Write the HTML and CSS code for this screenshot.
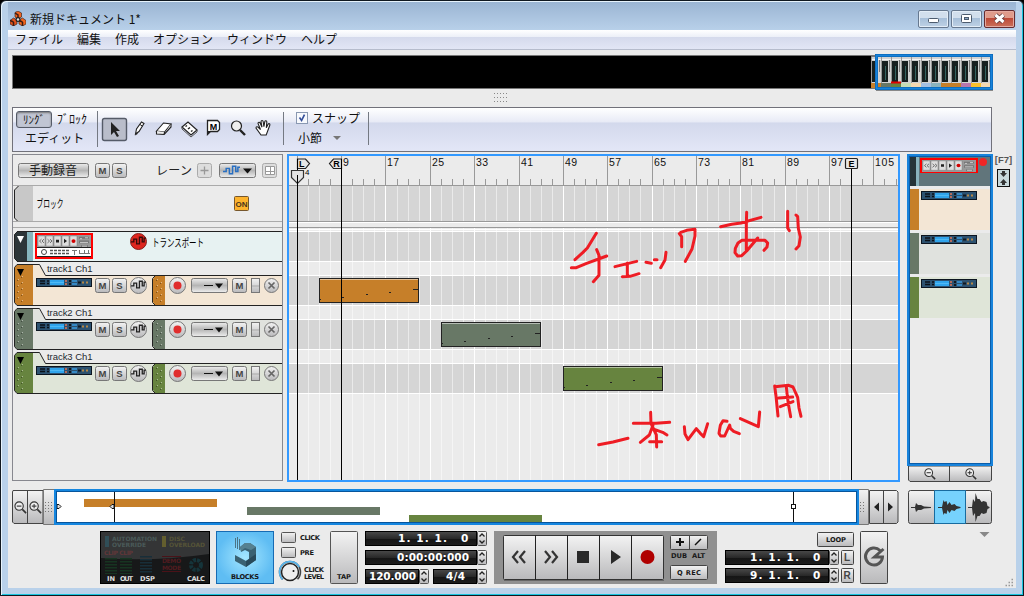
FILE: index.html
```html
<!DOCTYPE html>
<html lang="ja">
<head>
<meta charset="utf-8">
<title>新規ドキュメント 1*</title>
<link rel="stylesheet" href="styles.css">
</head>
<body>
<svg class="defs" width="0" height="0">
  <defs>
    <linearGradient id="metal" x1="0" y1="0" x2="0" y2="1"><stop offset="0" stop-color="#f3f3f3"/><stop offset="1" stop-color="#b9b9bb"/></linearGradient>
    <linearGradient id="gloss" x1="0" y1="0" x2="0" y2="1"><stop offset="0" stop-color="#ededed"/><stop offset=".5" stop-color="#b5b5b5"/><stop offset="1" stop-color="#efefef"/></linearGradient>
    <linearGradient id="lcd" x1="0" y1="0" x2="0" y2="1"><stop offset="0" stop-color="#4a4a4a"/><stop offset=".5" stop-color="#292929"/><stop offset=".55" stop-color="#151515"/><stop offset="1" stop-color="#1c1c1c"/></linearGradient>
    <radialGradient id="glow"><stop offset="0" stop-color="#a4e6ff"/><stop offset="1" stop-color="#5fbdf3"/></radialGradient>
    <symbol id="synth" viewBox="0 0 56 9">
      <rect width="56" height="9" fill="#0c1520"/><rect x="1" y="1" width="54" height="7" fill="#2d5270"/>
      <path d="M4 3h5M4 5.500h5M11 3h2M11 5.500h2" stroke="#0b1118" stroke-width="1.500"/>
      <rect x="14" y="2" width="14" height="5" fill="#30a4ec"/><path d="M14 4.500h14" stroke="#65c7fa" stroke-width=".6"/>
      <path d="M30 2v2M30 5v2" stroke="#e17555" stroke-width="1.500"/><path d="M33 3h2M33 6h2M42 4.500h3" stroke="#101820" stroke-width="2"/>
      <path d="M36 3h5M36 6h5" stroke="#3a9ce0" stroke-width="1.500"/><path d="M46 4.500h2M50 4.500h2" stroke="#b58846" stroke-width="2"/>
    </symbol>
    <symbol id="mini" viewBox="0 0 54 14" preserveAspectRatio="none">
      <rect width="54" height="14" fill="#999"/>
      <g fill="#ddd" stroke="#777" stroke-width=".5"><path d="M1 1h7v11H1zM9 1h7v11H9zM17 1h7v11h-7zM25 1h7v11h-7zM33 1h7v11h-7z"/></g>
      <path d="M4.500 4.500l-2 2 2 2M7 4.500l-2 2 2 2M10.500 4.500l2 2-2 2M13 4.500l2 2-2 2" fill="none" stroke="#666"/>
      <path d="M19 5h3v3h-3zM27 4l3 2.500-3 2.500z" fill="#222"/><circle cx="36.500" cy="6.500" r="2" fill="#d20000"/>
      <path d="M42 2h10v2H42zM42 6h10v3H42zM44 11h7v2h-7z" fill="#777"/><path d="M43 4h2M48 3h3M43 8h8M45 12h5" stroke="#ccc"/>
    </symbol>
    <symbol id="wave" viewBox="0 0 16 10"><path d="M0 6h3V3h3v5h3V1h3v5h2V2h2" fill="none" stroke="currentColor" stroke-width="1.400"/></symbol>
    <symbol id="mag" viewBox="0 0 14 14"><circle cx="5.500" cy="5.500" r="4.500" fill="#fff" fill-opacity=".5" stroke="#333" stroke-width="1.200"/><path d="M9 9l4 4" stroke="#333" stroke-width="1.800"/><path d="M3 5.500h5" stroke="#333" stroke-width="1.200"/></symbol>
    <symbol id="spin" viewBox="0 0 10 15"><rect x=".5" y=".5" width="9" height="14" rx="1" fill="url(#metal)" stroke="#555"/><path d="M2.500 5.500L5 3l2.500 2.500M2.500 9.500L5 12l2.500-2.500" fill="none" stroke="#222" stroke-width="1.300"/></symbol>
    <symbol id="track" viewBox="14 264 268 42">
      <path d="M17 264.500h22l6 10.500h237v30H17l-2.500-2.500V267z" fill="var(--tint)"/>
      <path d="M33 305V265H17l-2.500 2.500v35l2.500 2.500z" fill="var(--hue)"/>
      <path d="M153 279v23l2 3h10v-29h-10z" fill="var(--hue)"/>
      <path d="M282 275.500H45.500l-6-11H17l-2.500 3v35l2.500 3h265M155.500 275.500l-3 3v24l3 3" fill="none" stroke="#222"/>
      <path d="M17 269h7l-3.500 7z" fill="#000"/>
      <g stroke="#fff" stroke-opacity=".45" stroke-dasharray="1 5"><path d="M18.500 279v24M22.500 276v27M157.500 279v24M161.500 282v21"/></g>
      <g stroke="#000" stroke-opacity=".35" stroke-dasharray="1 5"><path d="M17.500 280v24M21.500 277v26M156.500 280v24M160.500 283v20"/></g>
      <use href="#synth" x="36" y="278" width="56" height="9"/>
      <g fill="url(#metal)" stroke="#777"><rect x="95.500" y="278.500" width="14" height="14" rx="2"/><rect x="112.500" y="278.500" width="14" height="14" rx="2"/><circle cx="138.500" cy="285.500" r="8"/><circle cx="177.500" cy="285.500" r="8"/><rect x="232.500" y="278.500" width="14" height="14" rx="2"/><rect x="251.500" y="278.500" width="8" height="14"/><circle cx="271.500" cy="285.500" r="7"/></g>
      <rect x="191.500" y="278.500" width="36" height="14" rx="2" fill="url(#gloss)" stroke="#777"/>
      <path d="M252 286h7" stroke="#aaa"/><circle cx="177.500" cy="285.500" r="4" fill="#e02d2d"/>
      <use href="#wave" x="131" y="280" width="15" height="10" color="#222"/>
      <path d="M204 285.500h9" stroke="#111"/><path d="M215 283.500h8l-4 5z" fill="#111"/>
      <path d="M268.500 282.500l6 6m0-6l-6 6" stroke="#666" stroke-width="1.700"/>
      <g class="btn-letter"><text x="102.500" y="289">M</text><text x="119.500" y="289">S</text><text x="239.500" y="289">M</text></g>
    </symbol>
  </defs>
</svg>

<div class="window">
  <header class="titlebar">
    <svg class="app-icon" viewBox="0 0 16 15"><g stroke="#2b1a12" stroke-width=".6"><path d="M5 1.500L8 0l3.500 2v4L8 8 5 6z" fill="#f0641f"/><path d="M0 9.500L3.500 7 7 9v4l-3.500 2L0 13z" fill="#e2511a"/><path d="M9 9l3.500-2L16 9.500V13l-3.500 2L9 13z" fill="#f0641f"/></g><path d="M5 2l3 2v4M3.500 11v4M3.500 11L0 9.500M12.500 11v4M9 9.500l3.500 1.500" stroke="#3a1c14" stroke-width="1.500" fill="none"/><circle cx="8" cy="8.500" r="2.500" fill="#222"/><circle cx="8" cy="8.500" r="1.200" fill="#ddd"/></svg>
    <h1 class="title">新規ドキュメント 1*</h1>
    <div class="caption-buttons">
      <span class="caption"><svg viewBox="0 0 29 16"><rect x="9.500" y="7.500" width="10" height="4" rx="1" fill="#fff" stroke="#4c5b6e"/></svg></span>
      <span class="caption"><svg viewBox="0 0 29 16"><rect x="9.500" y="3.500" width="10" height="8" rx="1" fill="#fff" stroke="#4c5b6e"/><rect x="12.500" y="6.500" width="4" height="2" fill="#8ca6c4" stroke="#4c5b6e"/></svg></span>
      <span class="caption close"><svg viewBox="0 0 29 16"><path d="M10.500 4l8 7m0-7l-8 7" stroke="#5b3a3d" stroke-width="4.800"/><path d="M10.500 4l8 7m0-7l-8 7" stroke="#fff" stroke-width="3"/></svg></span>
    </div>
  </header>

  <main class="client">
    <nav class="menu"><span>ファイル</span><span>編集</span><span>作成</span><span>オプション</span><span>ウィンドウ</span><span>ヘルプ</span></nav>

    <svg class="rack" viewBox="12 54 982 38">
      <rect x="12" y="55" width="980" height="34" fill="#777"/><rect x="13" y="56" width="858" height="32"/>
      <g id="strips"></g>
      <path d="M891 82.500h10" stroke="#e10000" stroke-width="2"/>
      <path d="M876 90.500h117" stroke="#888"/><rect x="876.500" y="55.500" width="115" height="33" fill="none" stroke="#0b68b8" stroke-width="3"/><rect x="876.500" y="55.500" width="115" height="33" fill="none" stroke="#1883db" stroke-width="1.500"/>
    </svg>

    <div class="grip"><svg viewBox="0 0 15 11"><path d="M0 1.500h15M0 5.500h15M0 9.500h15" stroke="#888" stroke-dasharray="1 2"/></svg></div>

    <section class="toolbar">
      <div class="mode"><div class="mode-tabs"><button class="song">ﾘﾝｸﾞ</button><span class="block-tab">ﾌﾞﾛｯｸ</span></div><span class="edit-label">エディット</span></div>
      <div class="tools">
        <svg viewBox="98 108 190 43">
          <rect x="102.500" y="118.500" width="24" height="22" rx="2" fill="#b9bdca" stroke="#555b68" stroke-width="1.400"/>
          <path d="M111 122v13l3-3 3 5 2-1-3-5h4z" fill="#222"/>
          <path d="M135.500 134l1-5 5-7 2.500 1.500-5 8z" fill="#fff" stroke="#222" stroke-width="1.100"/><path d="M135 135.500l1-3 2 1.200z" fill="#222"/><path d="M140 124.500l2.500 1.700" stroke="#222"/>
          <path d="M156.500 131l7-8 7.500 1-6.500 8z" fill="#fff" stroke="#222" stroke-width="1.100"/><path d="M156.500 131v3l7.500.5.500-2.500M164 134.500l7-7.500v-3" fill="#eee" stroke="#222" stroke-width="1.100"/>
          <path d="M182 127l6-5 9 8-6 5z" fill="#fff" stroke="#222" stroke-width="1.200"/><path d="M185.500 126.500l1.500-1M191 131.500l1.500-1M188 129l2-1.500" stroke="#222" stroke-width="1.500"/><path d="M182 127v2l9 8 6-5v-2" fill="none" stroke="#555"/>
          <path d="M207.500 120.500h10l2 2v7l-2 2h-7l-3 3z" fill="#fff" stroke="#222" stroke-width="1.300"/><path d="M207 131v4l4-4z" fill="#222"/><text class="tool-m" x="213.500" y="129.500">M</text>
          <circle cx="236.500" cy="126" r="5" fill="#eee" stroke="#222" stroke-width="1.200"/><path d="M240 130l5 5" stroke="#222" stroke-width="2.400"/>
          <path d="M261 135l-5-7c0-1.500 1.500-1.500 2.500-.5l2 2-2.500-6c0-1.700 1.700-1.700 2.200-.3l1.800 4-1-5.500c.2-1.700 2-1.500 2.200 0l.7 5 .9-5c.4-1.500 2.200-1 2 .5l-.5 5.500 1.800-3.500c.8-1.200 2.200-.4 1.700 1l-3.600 9.800z" fill="#fff" stroke="#222" stroke-width="1.100"/>
        </svg>
      </div>
      <div class="snap"><label><span class="check"><svg viewBox="0 0 12 12"><path d="M3 5.500l2.500 3.500 3.500-7" fill="none" stroke="#344f9a" stroke-width="2"/></svg></span>スナップ</label><div class="unit">小節<i class="down"></i></div></div>
    </section>

    <section class="work">
      <aside class="tracks">
        <svg class="track-head" viewBox="13 155 269 109">
          <path d="M13 185.500h269M13 221.500h269M13 227.500h269" stroke="#aaa"/>
          <rect x="18.500" y="163.500" width="70" height="14" rx="2" fill="url(#gloss)" stroke="#777"/><text class="rec" x="29" y="175" textLength="48">手動録音</text>
          <g fill="url(#metal)" stroke="#777"><rect x="95.500" y="163.500" width="14" height="14" rx="2"/><rect x="112.500" y="163.500" width="14" height="14" rx="2"/></g>
          <g class="btn-letter"><text x="102.500" y="174">M</text><text x="119.500" y="174">S</text></g>
          <text class="lane" x="156" y="175" textLength="36">レーン</text>
          <g fill="#ddd" stroke="#aaa"><rect x="197.500" y="163.500" width="14" height="14" rx="2"/><rect x="262.500" y="163.500" width="14" height="14" rx="2"/></g>
          <path d="M200.500 170.500h8M204.500 166.500v8" stroke="#999" stroke-width="1.300"/><path d="M265.500 166.500h9v8h-9zM265.500 171.500h9M270.500 166.500v8" fill="#fff" stroke="#999"/>
          <rect x="219.500" y="163.500" width="36" height="14" rx="2" fill="url(#gloss)" stroke="#777"/><use href="#wave" x="223" y="165" width="17" height="11" color="#286fc2"/><path d="M243 168.500h9l-4.500 5z" fill="#111"/>
          <path d="M33 221V186H18l-3.500 4v28l3 3z" fill="#c8c8c8"/><path d="M18.500 186l-4 4v28l3 3" fill="none" stroke="#222"/>
          <text class="block-label" x="36.500" y="208" textLength="27" lengthAdjust="spacingAndGlyphs">ブロック</text>
          <rect x="234.500" y="196.500" width="14" height="14" rx="1" fill="#fdb32d" stroke="#76572d"/><text class="on" x="241.500" y="206.500">ON</text>
          <path d="M17 231.500h265v30H17l-2.500-3v-24z" fill="#e7f2f2"/><path d="M27 231.500H17l-2.500 3v24l2.500 3h10z" fill="#2c3538"/><path d="M27 232h6v29h-6z" fill="#86b5be"/><path d="M17 231.500h265M17 261.500h265M17.500 231.500l-3 3v24l3 3" fill="none" stroke="#222"/><path d="M17 236h7l-3.500 7z" fill="#fff"/>
          <rect x="36" y="234" width="56" height="24" fill="#fff" stroke="#f00" stroke-width="2"/><use href="#mini" x="37" y="235" width="54" height="13"/><path d="M37 247.500h54M37 256.500h54" stroke="#222"/><circle cx="44" cy="252" r="2.500" fill="none" stroke="#444"/><path d="M50 250.500h20M50 253.500h20" stroke="#555" stroke-width="1.500" stroke-dasharray="3 1"/><path d="M72 250.500h5M74.500 250v5M79 253.500h11M79.500 250v4M84.500 250v4M88.500 250v4" stroke="#777"/>
          <circle cx="138.500" cy="241.500" r="8" fill="#df261f" stroke="#85201c"/><use href="#wave" x="131" y="236" width="15" height="10" color="#360b0b"/>
          <text class="block-label" x="152" y="247" textLength="52" lengthAdjust="spacingAndGlyphs">トランスポート</text>
        </svg>
        <div class="track track-orange"><svg viewBox="14 264 268 42"><use href="#track" x="14" y="264" width="268" height="42"/><text class="track-name" x="47" y="272" textLength="45.500">track1 Ch1</text></svg></div>
        <div class="track track-slate"><svg viewBox="14 264 268 42"><use href="#track" x="14" y="264" width="268" height="42"/><text class="track-name" x="47" y="272" textLength="45.500">track2 Ch1</text></svg></div>
        <div class="track track-green"><svg viewBox="14 264 268 42"><use href="#track" x="14" y="264" width="268" height="42"/><text class="track-name" x="47" y="272" textLength="45.500">track3 Ch1</text></svg></div>
      </aside>

      <section class="arrange">
        <svg viewBox="289 156 609 324">
          <path d="M289 186h609v35H289zM289 232h609v29H289zM289 276h609v29H289zM289 320h609v29H289zM289 364h609v29H289z" fill="#d5d5d5"/>
          <g id="grid"></g>
          <path d="M289 229.500h609M289 231.500h609M289 222.500h609M289 261.500h609M289 275.500h609M289 305.500h609M289 319.500h609M289 349.500h609M289 363.500h609M289 393.500h609" stroke="#fff"/>
          <path d="M289 185.500h609M289 221.500h609M289 227.500h609" stroke="#999"/>
          <g id="ruler" class="ruler"></g>
          <g stroke="#222"><rect x="319.500" y="278.500" width="99" height="24" fill="#c67f29"/><rect x="441.500" y="322.500" width="99" height="24" fill="#687866"/><rect x="563.500" y="366.500" width="99" height="24" fill="#67843f"/></g>
          <path d="M320 279.500h98M442 323.500h98M564 367.500h98" stroke="#fff" stroke-opacity=".5"/>
          <g id="notes" stroke="#222"></g>
          <g fill="#e7e7e7" stroke="#222" stroke-width="1.200"><path d="M297.500 159h8l4 4.500-4 5h-8zM341.500 159h-8l-4 4.500 4 5h8z"/><rect x="845.500" y="158.500" width="12" height="10" rx="1"/></g>
          <path d="M297.500 159v321M341.500 159v321M851.500 169v311" stroke="#000"/>
          <path d="M291.500 170.500h12v7l-6 6-6-6z" fill="#e3e3e3" stroke="#333" stroke-width="1.200"/>
          <path d="M297.500 175v10" stroke="#000"/><text class="marker" x="301.800" y="167">L</text><text class="marker" x="336.500" y="167">R</text><text class="marker" x="851.500" y="167">E</text><text class="signature" x="305" y="175">4</text>
          <g class="ink" transform="translate(550 190) scale(.33333)">
            <path d="M139 130L112 174 99 187 75 209M64 233h15l29-12 62-23M140 179l7 17v60l-17 19M195 230l65-16M232 219v40M217 260l23-1 27-8M288 217l16 3M313 209h8M348 187l-3 23-13 23"/>
            <path d="M388 131l7 9v30M392 127l18-6 25-3v20l-9 39-20 37M512 110l33-7 28-4 60-17M590 67l-1 39v74M623 144l-33 39-15 14-12 1-8-10 1-13 8-16 12-8h69l8 8-2 12-9 10M713 64v50l5 8M738 75l5 5 2 35 6 26-4 26-9 10"/>
            <path d="M146 764l43-8 45-11M250 700h68l41-3M302 667l1 33 16 35 1 36M309 706l-11 29-27 22M315 719l23 8 13 8M299 755h36M403 710l2 22 9 17 25-33 12 14 10 10 12-39M531 694l-12-2-8 14-4 24 5 8h12l15-33 2 10 10 9 17 7M571 686l54 24 4-44"/>
            <path d="M674 588l4 30 6 60M675 590l41-4 13 5 14 31 4 32 6 25M709 590l2 20 4 31 7 39M686 624l42-3M691 650l38-15"/>
          </g>
        </svg>
      </section>

      <aside class="side">
        <svg class="navigator" viewBox="907 154 86 312">
          <rect x="908" y="155" width="84" height="310" fill="#ebebeb"/>
          <path d="M910 157h81v29h-81z" fill="#61757b"/><path d="M910 157h6v29h-6z" fill="#263438"/><path d="M916 157h3v29h-3z" fill="#89b3bd"/><rect x="921" y="159" width="56" height="13" fill="#ccc" stroke="#f00" stroke-width="2"/><use href="#mini" x="922" y="160" width="54" height="12"/><circle cx="983" cy="162" r="4" fill="#ef2626"/>
          <path d="M910 189h81v41h-81z" fill="#f3e6d5"/><path d="M910 189h9v41h-9z" fill="#c67f29"/><use href="#synth" x="921" y="191" width="56" height="9"/>
          <path d="M910 233h81v41h-81z" fill="#e0e2de"/><path d="M910 233h9v41h-9z" fill="#687866"/><use href="#synth" x="921" y="235" width="56" height="9"/>
          <path d="M910 277h81v41h-81z" fill="#dfe5d8"/><path d="M910 277h9v41h-9z" fill="#67843f"/><use href="#synth" x="921" y="279" width="56" height="9"/>
          <rect x="908.500" y="155.500" width="83" height="309" fill="none" stroke="#0b5da9" stroke-width="3"/><rect x="908" y="155" width="84" height="310" fill="none" stroke="#1883db" stroke-width="2"/>
        </svg>
        <svg class="nav-zoom" viewBox="907 466 86 17"><path d="M908.500 466v14l1.500 1.500h80l1.500-1.500v-14z" fill="url(#metal)" stroke="#444"/><path d="M949.500 466v15" stroke="#444"/><use href="#mag" x="924" y="468" width="12" height="12"/><use href="#mag" x="965" y="468" width="12" height="12"/><path d="M969.700 470.700v4" stroke="#333"/></svg>
      </aside>
      <aside class="f7"><span>[F7]</span><svg viewBox="0 0 13 18"><rect x=".5" y=".5" width="12" height="17" fill="#c8d9dc" stroke="#111"/><path d="M5 2h3v2h2L6.500 8 3 4h2zM5 16h3v-2h2L6.500 10 3 14h2z" fill="#333"/></svg></aside>
    </section>

    <section class="overview">
      <svg viewBox="12 489 887 37">
        <path d="M13 490.500h30v33H14l-1.500-1.500v-30zM869.500 490.500h27l1.500 1.500v30l-1.500 1.500h-27z" fill="url(#metal)" stroke="#444"/><path d="M27.500 490v34M883.500 490v34" stroke="#444"/>
        <use href="#mag" x="14" y="501" width="13" height="13"/><use href="#mag" x="29" y="501" width="13" height="13"/><path d="M34.100 504v4.300" stroke="#333"/>
        <path d="M43.500 489.500h11v35h-11zM857.500 489.500h11v35h-11z" fill="url(#metal)" stroke="#777"/><g stroke="#777" stroke-dasharray="1 2"><path d="M45.500 502v12M48.500 502v12M51.500 502v12M860.500 502v12M863.500 502v12"/></g><path d="M879 502.500v9l-5-4.500zM888 502.500v9l5-4.500z" fill="#222"/>
        <rect x="55" y="490" width="802" height="34" fill="#fff"/><path d="M84 499h133v8H84z" fill="#c67f29"/><path d="M247 507h133v8H247z" fill="#687866"/><path d="M409 515h133v8H409z" fill="#67843f"/>
        <path d="M114.500 492v30M793.500 492v30M56.500 492v30" stroke="#111"/><path d="M57 504.500h2l2 2-2 2h-2zM114 504.500h-2l-2 2 2 2h2z" fill="#ddd" stroke="#111"/><rect x="791.500" y="504.500" width="4" height="4" fill="#fff" stroke="#111"/>
        <rect x="55.500" y="490.500" width="802" height="33" fill="none" stroke="#07559c" stroke-width="3"/><rect x="55" y="490" width="803" height="34" fill="none" stroke="#1586df" stroke-width="2"/>
      </svg>
      <svg class="amplitude" viewBox="908 489 85 37">
        <rect x="908.500" y="490.500" width="83" height="33" rx="2" fill="url(#metal)" stroke="#444"/><path d="M934.500 490.500h31v33h-31z" fill="#76d2fd" stroke="#176b9f"/>
        <g fill="#333"><path d="M911 507h4l1-4 2 2 3 0 3 1.500 7 .5v1l-7 .5-3 1.500h-3l-2 2-1-4h-4zM938 507h4l1.500-7 1 2 2-1 1 4 2-3 2 3 3-1 2 2 4 1v1l-4 1-2 2-3-1-2 3-2-3-1 4-2-1-1 2-1.500-7h-4zM968 507h4l1-8 2 3 .5-9 2 6 2 0 2 3 2-1 3 1 1 4 2 1v1l-2 1-1 4-3 1-2-1-2 3h-2l-2 6-.5-9-2 3-1-8h-4z"/></g>
      </svg>
    </section>

    <section class="transport">
      <svg viewBox="98 529 918 59">
        <rect x="100.500" y="531.500" width="109" height="52" fill="#171819" stroke="#000"/><path d="M101 532h108v22q-55 8-108 4z" fill="#343536"/>
        <g class="faint"><text x="112" y="541" fill="#4a5a59" textLength="45">AUTOMATION</text><text x="112" y="547" fill="#4a5a59" textLength="34">OVERRIDE</text><text x="169" y="541" fill="#565438">DISC</text><text x="169" y="547" fill="#565438" textLength="36">OVERLOAD</text><text x="104" y="555" fill="#623739" textLength="29">CLIP CLIP</text><text x="162" y="563" fill="#521c20" textLength="19">DEMO</text><text x="162" y="570" fill="#521c20" textLength="19">MODE</text></g>
        <path d="M105 536h4v11h-4z" fill="#304e57"/><path d="M162 536h4v11h-4z" fill="#635e2e"/><path d="M111 558v16M126 558v16" stroke="#173421" stroke-width="12" stroke-dasharray="1.500 1.500"/><path d="M146 556v18" stroke="#182e39" stroke-width="12" stroke-dasharray="1.500 1.500"/><path d="M162 556.500h19M162 571.500h19" stroke="#4a1218"/><circle cx="196" cy="565" r="5" fill="none" stroke="#15343a" stroke-width="4" stroke-dasharray="3 1"/>
        <g class="tiny light"><text x="107" y="581" textLength="8">IN</text><text x="120" y="581" textLength="13">OUT</text><text x="140" y="581" textLength="15">DSP</text><text x="187" y="581" textLength="18">CALC</text></g>
        <rect x="216.500" y="531.500" width="57" height="52" fill="url(#glow)" stroke="#176bb3"/><path d="M235.500 538v10M237.500 537v12M239.500 539v11" stroke="#4a7385"/><path d="M240 547l5-4h5l6 4v13l-10 7-11-6v-6l11 6 3-2v-7l-4-2-4 2z" fill="#3a6273"/><path d="M246 561l10-7v6l-10 7z" fill="#294a5a"/><path d="M240 547l5-4h5l6 4-5 3-6-2-4 3z" fill="#568190"/><text class="tiny" x="231" y="579" textLength="28">BLOCKS</text>
        <g fill="url(#metal)" stroke="#555"><rect x="281.500" y="532.500" width="14" height="10" rx="1"/><rect x="281.500" y="547.500" width="14" height="10" rx="1"/><rect x="330.500" y="531.500" width="27" height="52" rx="1"/></g><circle cx="290" cy="572" r="10.500" fill="none" stroke="#444" stroke-width="1.500" stroke-dasharray="49 17" transform="rotate(135 290 572)"/><circle cx="290" cy="572" r="10.500" fill="none" stroke="#55b8f1" stroke-width="1.500" stroke-dasharray="36 30" transform="rotate(135 290 572)"/><circle cx="290" cy="572" r="8.500" fill="#eee" stroke="#222" stroke-width="1.500"/><circle cx="293.500" cy="571" r="1" fill="#111"/>
        <g class="tiny"><text x="300" y="540" textLength="20">CLICK</text><text x="300" y="555" textLength="14">PRE</text><text x="304" y="572" textLength="20">CLICK</text><text x="304" y="579" textLength="20">LEVEL</text><text x="337" y="579" textLength="14">TAP</text></g>
        <g fill="url(#lcd)" stroke="#000"><rect x="365.500" y="531.500" width="111" height="14"/><rect x="365.500" y="550.500" width="111" height="14"/><rect x="365.500" y="569.500" width="53" height="14"/><rect x="433.500" y="569.500" width="43" height="14"/><rect x="725.500" y="550.500" width="103" height="14"/><rect x="725.500" y="568.500" width="103" height="14"/></g>
        <g class="lcd"><text x="398" y="542" textLength="49">1. 1. 1.</text><text x="461" y="542">0</text><text x="397" y="561" textLength="72">0:00:00:000</text><text x="369" y="580" textLength="47">120.000</text><text x="446" y="580" textLength="19">4/4</text><text x="750" y="561" textLength="49">1. 1. 1.</text><text x="813" y="561">0</text><text x="750" y="579" textLength="49">9. 1. 1.</text><text x="813" y="579">0</text></g>
        <use href="#spin" x="477" y="531" width="10" height="15"/><use href="#spin" x="477" y="550" width="10" height="15"/><use href="#spin" x="419" y="569" width="10" height="15"/><use href="#spin" x="477" y="569" width="10" height="15"/><use href="#spin" x="829" y="550" width="10" height="15"/><use href="#spin" x="829" y="568" width="10" height="15"/>
        <rect x="494" y="531" width="223" height="53" fill="#909090"/><rect x="503.500" y="535.500" width="160" height="44" rx="1" fill="url(#metal)" stroke="#333"/><path d="M504 580.500h160" stroke="#666"/><path d="M535.500 535v45M567.500 535v45M599.500 535v45M631.500 535v45" stroke="#222"/>
        <path d="M518 551l-5 6 5 6M525 551l-5 6 5 6M545 551l5 6-5 6M552 551l5 6-5 6" fill="none" stroke="#333" stroke-width="2.200"/><path d="M577 551h12v12h-12zM611 550v14l10-7z" fill="#292929"/><circle cx="647.500" cy="557" r="7" fill="#b00000"/>
        <g fill="url(#metal)" stroke="#444"><rect x="670.500" y="535.500" width="37" height="14" rx="1"/><rect x="670.500" y="565.500" width="37" height="14" rx="1"/><rect x="817.500" y="532.500" width="36" height="14" rx="1"/><rect x="841.500" y="550.500" width="12" height="14" rx="1"/><rect x="841.500" y="568.500" width="12" height="14" rx="1"/><rect x="860.500" y="531.500" width="27" height="52" rx="1"/></g><path d="M689.500 535v15" stroke="#444"/><path d="M676 542h8M680 538v8" stroke="#111" stroke-width="2"/><path d="M695 545l6-6" stroke="#111" stroke-width="1.500"/>
        <g class="tiny"><text x="671" y="558" textLength="16">DUB</text><text x="692" y="558" textLength="13">ALT</text><text x="677" y="575" textLength="24">Q REC</text><text x="826" y="542" textLength="20">LOOP</text></g><text class="lr" x="844" y="561">L</text><text class="lr" x="843.500" y="579">R</text>
        <path d="M880 550.500a8.500 8.500 0 1 0 2.500 6.500h-8l9-8" fill="none" stroke="#555" stroke-width="3"/><path d="M979.500 532h10l-5 5z" fill="#888"/>
        <path d="M1013 579.500h-2M1013 582.500h-5M1013 585.500h-8" stroke="#999" stroke-width="1.500" stroke-dasharray="1.500 1.500"/>
      </svg>
    </section>
  </main>
</div>
<script src="script.js"></script>
</body>
</html>
```

FILE: styles.css
```css
* { box-sizing: border-box; }
html, body { width: 1024px; height: 596px; overflow: hidden; }
body { margin: 0; background: #000; font: 12px "Noto Sans CJK JP", sans-serif; color: #111; }
svg { display: block; }
svg text { font-family: "Liberation Sans", "Noto Sans CJK JP", sans-serif; }
.defs { position: absolute; }
.window { width: 1024px; height: 596px; border: 1px solid #101820; border-radius: 6px 6px 0 0; background: #b9d1ea; box-shadow: inset 1px 1px #e7f3fc, inset -1px -1px #18c5df; padding: 0 7px; }
.titlebar { display: flex; align-items: center; height: 29px; padding: 4px 1px 0 2px; margin: 1px 0 -1px; background: linear-gradient(#9bb5d3, #b9d1ea); }
.app-icon { width: 16px; height: 15px; }
.title { margin: 0 0 0 4px; font-size: 12px; font-weight: 400; line-height: 20px; }
.caption-buttons { display: flex; gap: 2px; margin-left: auto; }
.caption { width: 31px; height: 18px; border: 1px solid #66788f; border-radius: 2px; background: linear-gradient(#d2dfed 45%, #a7bfd9 46%, #bed1e5); box-shadow: inset 0 0 0 1px #e3edf7; }
.caption svg { width: 29px; height: 16px; }
.close { border-color: #662c30; background: linear-gradient(#df9b8b 45%, #bd4937 46%, #cb715b); box-shadow: inset 0 0 0 1px #e4aaa0; }
.client { height: 558px; background: #ebebeb; }
.menu { display: flex; gap: 14px; height: 20px; padding-left: 7px; line-height: 18px; white-space: nowrap; border-bottom: 1px solid #b6bccc; background: linear-gradient(#fff, #edf0f8 35%, #d5daec 38%, #e2e6f5); }
.rack { width: 982px; height: 38px; margin: 4px 0 0 4px; }
.grip { display: flex; justify-content: center; height: 15px; padding-right: 22px; }
.grip svg { width: 15px; height: 11px; }
.toolbar { display: flex; height: 45px; width: 980px; margin-left: 4px; border: 1px solid #71717a; background: linear-gradient(#fff, #e8ebf6 32%, #d3d9ec 35%, #e3e7f7); }
.mode { width: 85px; height: 36px; margin-top: 3px; border-right: 1px solid #747982; padding-left: 3px; }
.mode-tabs { display: flex; gap: 5px; height: 17px; line-height: 15px; white-space: nowrap; }
.song { width: 36px; height: 17px; padding: 0; border: 1px solid #555b68; border-radius: 3px; background: #c0c5d3; box-shadow: inset 0 1px 2px #777; font: 11px/13px "Noto Sans CJK JP", sans-serif; color: #111; }
.block-tab { font-size: 12px; }
.edit-label { display: block; padding-left: 9px; line-height: 20px; white-space: nowrap; }
.tools svg { width: 190px; height: 43px; }
.tool-m { font-weight: 700; font-size: 9px; text-anchor: middle; }
.snap { width: 86px; height: 33px; margin: 4px 0 0 -5px; padding: 0 0 0 12px; border-left: 1px solid #747982; border-right: 1px solid #747982; }
.snap label { display: flex; gap: 4px; align-items: center; height: 11px; white-space: nowrap; }
.check { width: 12px; height: 12px; border: 1px solid #8998b1; background: #f7f9fd; }
.check svg { width: 10px; height: 10px; }
.unit { display: flex; align-items: center; gap: 11px; padding-left: 2px; margin-top: 5px; line-height: 20px; }
.down { border: 4px solid transparent; border-top-color: #777; border-bottom: 0; }
.work { display: flex; height: 329px; margin: 2px 0 0 4px; }
.tracks { width: 271px; height: 327px; border: 1px solid #87888f; }
.track-head { width: 269px; height: 109px; }
.track { height: 42px; margin: 0 0 2px 1px; }
.track svg { width: 268px; height: 42px; }
.track-orange { --hue: #c67f29; --tint: #f3e6d5; }
.track-slate { --hue: #687866; --tint: #e0e2de; }
.track-green { --hue: #67843f; --tint: #dfe5d8; }
.track-name { font-size: 9.5px; fill: #1e2930; }
.btn-letter { font-size: 9.5px; font-weight: 700; text-anchor: middle; fill: #444; }
.rec, .lane { font-size: 12px; fill: #222; }
.block-label { font-size: 11px; }
.on { font-size: 8px; font-weight: 700; text-anchor: middle; fill: #49341b; }
.arrange { width: 613px; height: 328px; margin-left: 4px; border: 2px solid #3399ff; }
.arrange svg { width: 609px; height: 324px; }
.ruler { font-size: 10.5px; fill: #111; }
.marker { font-size: 9px; font-weight: 700; text-anchor: middle; }
.signature { font-size: 8px; }
.ink { fill: none; stroke: #ee1c24; stroke-width: 9; stroke-linecap: round; stroke-linejoin: round; }
.side { width: 86px; margin-left: 7px; }
.navigator { width: 86px; height: 312px; }
.nav-zoom { width: 86px; height: 17px; }
.f7 { display: flex; flex-direction: column; align-items: center; width: 19px; margin-left: 1px; font: 700 9.5px/11px "Liberation Sans", sans-serif; color: #555; }
.f7 svg { width: 13px; height: 18px; margin-top: 4px; }
.overview { display: flex; gap: 9px; height: 37px; margin: 6px 0 0 4px; }
.overview svg { width: 887px; height: 37px; }
.overview .amplitude { width: 85px; }
.transport { height: 59px; margin: 3px 0 0 90px; }
.transport svg { width: 918px; height: 59px; }
.tiny text, text.tiny { font: 700 6.7px "DejaVu Sans", sans-serif; fill: #181818; }
.tiny.light text { fill: #ddd; }
.faint text { font: 700 6px "DejaVu Sans", sans-serif; }
.lcd text { font: 700 10.5px "DejaVu Sans", sans-serif; fill: #fff; }
.lr { font-size: 10px; font-weight: 700; fill: #444; }
```

FILE: script.js
```js
const path = (d, stroke, width = 1) => `<path d="${d}" stroke="${stroke}" stroke-width="${width}"/>`;

// Bar lines: one every two bars, with a numbered line every eight.
let grid = "", ruler = "";
for (let i = 0; i < 55; i++) {
  const x = Math.floor(297.2 + i * 11.09) + 0.5;
  const major = i % 4 === 0;
  if (x < 851) grid += path(`M${x} 186v35M${x} 228v252`, major ? "#fff" : "rgba(255,255,255,.5)");
  ruler += path(`M${x} ${major ? 156 : 179}V185`, "#999");
  if (major && i) ruler += `<text x="${x + 1.5}" y="166" textLength="${i * 2 + 1 > 99 ? 19 : i > 4 ? 12 : 6}">${i * 2 + 1}</text>`;
}
document.getElementById("grid").innerHTML = grid;
document.getElementById("ruler").innerHTML = ruler;

// Mixer channel strips in the rack overview.
const labels = ["#c67f29", "#687866", "#67843f", "#c7ddb5", "#f3d8b1", "#a5bfe0", "#8bb3bd", "#c67f29", "#c67f29", "#b976ab", "#fbc02d", "#f3d8b1"];
document.getElementById("strips").innerHTML = labels.map((color, i) => {
  const x = 871 + i * 10;
  return `<rect x="${x}" y="57" width="10" height="27" fill="#d2d2d2"/><rect x="${x + 1}" y="61" width="6" height="21" fill="#172020"/>`
    + path(`M${x + 4.5} 66v14`, "#356461") + path(`M${x + 8.5} 60v12`, "#777") + path(`M${x + 0.5} 57v26`, "#999") + path(`M${x + 1} 59.5h9`, "#f4f4f4")
    + `<rect x="${x}" y="83" width="10" height="5" fill="${color}"/>`;
}).join("");

// Notes sit at the same offsets in each clip.
document.getElementById("notes").innerHTML = [[319, 278], [441, 322], [563, 366]].map(([x, y]) =>
  `<path d="M${x} ${y + 21.500}h2M${x + 23} ${y + 19.500}h2M${x + 47} ${y + 16.500}h2M${x + 70} ${y + 14.500}h2M${x + 94} ${y + 11.500}h5"/>`).join("");
```
